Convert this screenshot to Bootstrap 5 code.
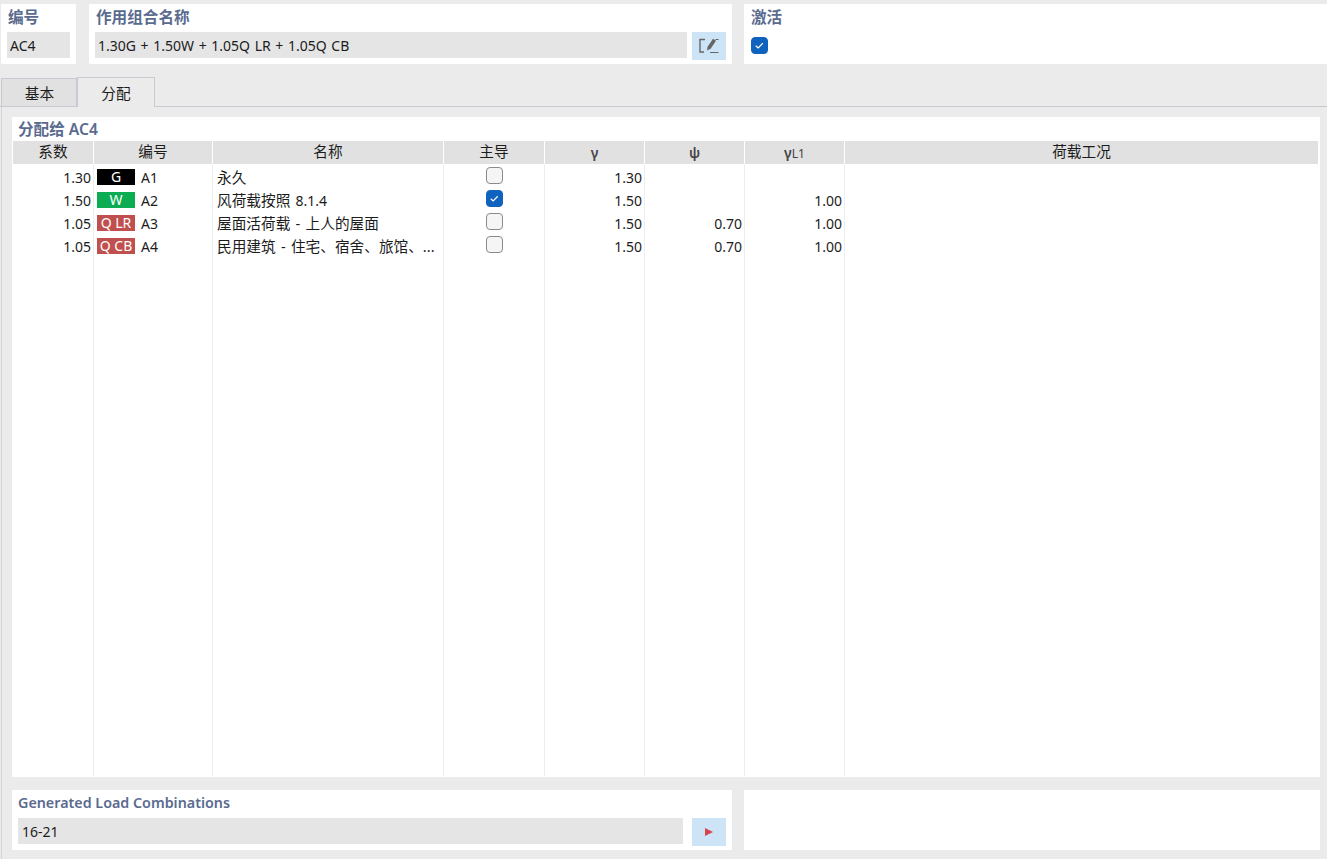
<!DOCTYPE html>
<html lang="zh">
<head>
<meta charset="utf-8">
<title>AC4</title>
<link rel="stylesheet" href="https://cdn.jsdelivr.net/npm/bootstrap@5.3.0/dist/css/bootstrap.min.css">
<style>
html,body{height:859px;overflow:hidden}
body{background:#ebebeb;font-family:"Noto Sans","Noto Sans CJK SC",sans-serif;font-size:14px;color:#1c1c1c;width:1327px}
.page{height:859px;padding-top:4px;display:flex;flex-direction:column}
.toprow{height:60px;gap:12px;padding-left:1px;flex:none}
.pnl{background:#fff;padding:0 6px;height:60px}
.pnl-id{width:75px;margin-right:1px}
.pnl-name{width:643px}
.pnl-act{flex:1}
.ttl{color:#5a6b8f;font-weight:600;font-size:15.6px;line-height:18px;padding-top:4px;height:28px;padding-left:1px}
.ttl-en{font-size:14.3px;padding-left:0}
.fld{background:#e5e5e5;height:26px;line-height:28px;padding-left:3px;color:#1c1c1c}
.fld-name{word-spacing:1px}
.sqbtn{width:34px;height:28px;background:#cde4f7;border:0;padding:0;margin-left:5px;flex:none;border-radius:0}
.chk{width:17px;height:17px;border-radius:4px;border:1.5px solid #8a8a8a;background:#f5f5f5;display:block}
.chk.on{background:#0f62bd;border-color:#0f62bd}
.chk svg{display:block;width:100%;height:100%}
.chk-act{margin-top:5px;margin-left:1px}
.tabrow{height:30px;margin-top:13px;padding-left:1px;border-bottom:1px solid #c9c9d1;flex:none}
.tabx{width:76px;height:28px;line-height:29px;padding-left:1px;text-align:center;background:#e1e1e1;border:1px solid #c9c9d1;border-bottom:0;font-size:14.67px}
.tabx.act{width:78px;height:30px;line-height:31px;padding-left:0;background:#ebebeb;margin-bottom:-1px}
.body-area{padding:10px 7px 0 10px;border-left:1px solid #d4d4d8;margin-left:1px;flex:1}
.mainp{background:#fff;height:660px;width:1308px;padding-top:3px}
.mainp .ttl{height:21px;padding:0 0 0 6px;line-height:19px}
.grid{table-layout:fixed;width:1305px;margin:0 0 0 1px;height:635px;border-collapse:separate;border-spacing:0}
.grid th{background:#e1e1e1;font-weight:400;font-size:14.67px;text-align:center;height:23px;padding:0;line-height:20px;border-right:1px solid #fff;border-bottom:0;color:#1c1c1c;vertical-align:top}
.grid th.gk{font-weight:600;font-size:14px;line-height:23px;color:#444}
.grid th.gk small{font-size:12px;font-weight:400;line-height:0}
.grid td{height:23px;padding:0 2px;line-height:23px;border:0;border-right:1px solid #ecedf0;white-space:nowrap;overflow:hidden;vertical-align:middle;color:#1c1c1c}
.grid tr.first td{padding-top:2px;height:25px}
.grid td:last-child,.grid th:last-child{border-right:0}
.grid tr.fill td{height:auto}
.grid td.nm{font-size:14.67px;word-spacing:1.5px;padding-left:4px}
.nm-lat{font-size:14px}
.num{text-align:right}
.ctr{text-align:center}
.ctr .chk{margin:-5px auto 0}
.tag{display:inline-block;width:38px;height:16px;line-height:15px;text-align:center;color:#fff;margin:0 6px 0 1px;vertical-align:1px}
.tg{background:#000}.tw{background:#0cad52}.tq{background:#c0504d}
.bottom{gap:12px;margin-top:13px}
.pnl-b1{width:720px}.pnl-b2{flex:1}
.fld2{width:665px;padding-left:4px}
.pnl-b1 .sqbtn{margin-left:9px}
</style>
</head>
<body>
<div class="page">
  <div class="d-flex toprow">
    <div class="pnl pnl-id">
      <div class="ttl">编号</div>
      <div class="fld">AC4</div>
    </div>
    <div class="pnl pnl-name">
      <div class="ttl">作用组合名称</div>
      <div class="d-flex">
        <div class="fld fld-name flex-grow-1">1.30G + 1.50W + 1.05Q LR + 1.05Q CB</div>
        <button class="btn sqbtn d-flex align-items-center justify-content-center" type="button" aria-label="编辑">
          <svg width="22" height="18" viewBox="0 0 22 18" fill="none"><path d="M7 2.5H2v12.5h4" stroke="#666" stroke-width="1.4"/><path d="M9 13.5l.6-3.8 5.4-8 3 2-5.4 8z" fill="#666"/><path d="M17.5 2.5h3M12 15.5h8.5" stroke="#666" stroke-width="1.2"/></svg>
        </button>
      </div>
    </div>
    <div class="pnl pnl-act">
      <div class="ttl">激活</div>
      <span class="chk on chk-act"><svg viewBox="0 0 16 16"><path d="M4 8.2l2.6 2.4L11.5 5.6" fill="none" stroke="#fff" stroke-width="1.3"/></svg></span>
    </div>
  </div>
  <div class="d-flex tabrow">
    <div class="tabx align-self-end">基本</div>
    <div class="tabx act align-self-end">分配</div>
  </div>
  <div class="body-area">
    <div class="mainp">
      <div class="ttl">分配给 AC4</div>
      <table class="table grid">
        <colgroup><col style="width:81px"><col style="width:119px"><col style="width:231px"><col style="width:101px"><col style="width:100px"><col style="width:100px"><col style="width:100px"><col></colgroup>
        <thead><tr><th>系数</th><th>编号</th><th>名称</th><th>主导</th><th class="gk">γ</th><th class="gk">ψ</th><th class="gk">γ<small>L1</small></th><th>荷载工况</th></tr></thead>
        <tbody>
          <tr class="first"><td class="num">1.30</td><td><span class="tag tg">G</span>A1</td><td class="nm">永久</td><td class="ctr"><span class="chk"></span></td><td class="num">1.30</td><td></td><td></td><td></td></tr>
          <tr><td class="num">1.50</td><td><span class="tag tw">W</span>A2</td><td class="nm">风荷载按照 <span class="nm-lat">8.1.4</span></td><td class="ctr"><span class="chk on"><svg viewBox="0 0 16 16"><path d="M4 8.2l2.6 2.4L11.5 5.6" fill="none" stroke="#fff" stroke-width="1.3"/></svg></span></td><td class="num">1.50</td><td></td><td class="num">1.00</td><td></td></tr>
          <tr><td class="num">1.05</td><td><span class="tag tq">Q LR</span>A3</td><td class="nm">屋面活荷载 - 上人的屋面</td><td class="ctr"><span class="chk"></span></td><td class="num">1.50</td><td class="num">0.70</td><td class="num">1.00</td><td></td></tr>
          <tr><td class="num">1.05</td><td><span class="tag tq">Q CB</span>A4</td><td class="nm">民用建筑 - 住宅、宿舍、旅馆、...</td><td class="ctr"><span class="chk"></span></td><td class="num">1.50</td><td class="num">0.70</td><td class="num">1.00</td><td></td></tr>
          <tr class="fill"><td></td><td></td><td></td><td></td><td></td><td></td><td></td><td></td></tr>
        </tbody>
      </table>
    </div>
    <div class="d-flex bottom">
      <div class="pnl pnl-b1">
        <div class="ttl ttl-en">Generated Load Combinations</div>
        <div class="d-flex">
          <div class="fld fld2">16-21</div>
          <button class="btn sqbtn d-flex align-items-center justify-content-center" type="button" aria-label="运行">
            <svg width="10" height="10" viewBox="0 0 10 10"><path d="M1 1l8 4-8 4z" fill="#d9434e"/></svg>
          </button>
        </div>
      </div>
      <div class="pnl pnl-b2"></div>
    </div>
  </div>
</div>
<script src="https://cdn.jsdelivr.net/npm/bootstrap@5.3.0/dist/js/bootstrap.bundle.min.js"></script>
</body>
</html>
